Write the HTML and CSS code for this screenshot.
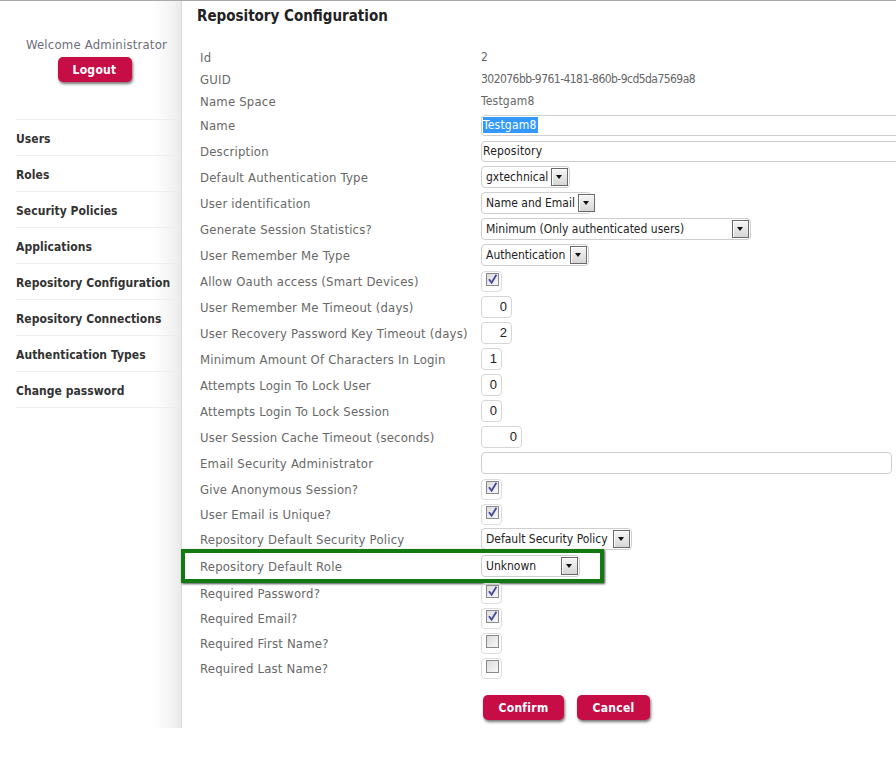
FILE: index.html
```html
<!DOCTYPE html>
<html>
<head>
<meta charset="utf-8">
<title>Repository Configuration</title>
<link rel="stylesheet" href="styles.css">
</head>
<body>
<div class="page">
  <aside class="sidebar">
    <div class="welcome">Welcome Administrator</div>
    <div class="logout-wrap"><button class="btn btn-logout">Logout</button></div>
    <nav class="menu">
      <a class="menu-item">Users</a>
      <a class="menu-item">Roles</a>
      <a class="menu-item">Security Policies</a>
      <a class="menu-item">Applications</a>
      <a class="menu-item">Repository Configuration</a>
      <a class="menu-item">Repository Connections</a>
      <a class="menu-item">Authentication Types</a>
      <a class="menu-item">Change password</a>
    </nav>
  </aside>
  <main class="content">
    <h1 class="title">Repository Configuration</h1>
    <div class="form">
      <div class="row row-t"><span class="label">Id</span><span class="value">2</span></div>
      <div class="row row-t"><span class="label">GUID</span><span class="value value-guid">302076bb-9761-4181-860b-9cd5da7569a8</span></div>
      <div class="row row-t"><span class="label">Name Space</span><span class="value">Testgam8</span></div>
      <div class="row"><span class="label">Name</span><span class="input input-wide"><span class="sel">Testgam8</span></span></div>
      <div class="row"><span class="label">Description</span><span class="input input-wide">Repository</span></div>
      <div class="row"><span class="label">Default Authentication Type</span><span class="select w-gx">gxtechnical<span class="drop"></span></span></div>
      <div class="row"><span class="label">User identification</span><span class="select w-ne">Name and Email<span class="drop"></span></span></div>
      <div class="row"><span class="label">Generate Session Statistics?</span><span class="select w-min">Minimum (Only authenticated users)<span class="drop"></span></span></div>
      <div class="row"><span class="label">User Remember Me Type</span><span class="select w-auth">Authentication<span class="drop"></span></span></div>
      <div class="row"><span class="label">Allow Oauth access (Smart Devices)</span><span class="cb"><span class="box checked"><svg viewBox="0 0 13 13" width="13" height="13"><path d="M3 6.2 L5.6 9.6 L10.4 1.8" fill="none" stroke="#3a4b9e" stroke-width="1.8"/></svg></span></span></div>
      <div class="row"><span class="label">User Remember Me Timeout (days)</span><span class="num n30">0</span></div>
      <div class="row"><span class="label">User Recovery Password Key Timeout (days)</span><span class="num n30">2</span></div>
      <div class="row"><span class="label">Minimum Amount Of Characters In Login</span><span class="num n20">1</span></div>
      <div class="row"><span class="label">Attempts Login To Lock User</span><span class="num n20">0</span></div>
      <div class="row"><span class="label">Attempts Login To Lock Session</span><span class="num n20">0</span></div>
      <div class="row"><span class="label">User Session Cache Timeout (seconds)</span><span class="num n40">0</span></div>
      <div class="row"><span class="label">Email Security Administrator</span><span class="input input-email"></span></div>
      <div class="row"><span class="label">Give Anonymous Session?</span><span class="cb"><span class="box checked"><svg viewBox="0 0 13 13" width="13" height="13"><path d="M3 6.2 L5.6 9.6 L10.4 1.8" fill="none" stroke="#3a4b9e" stroke-width="1.8"/></svg></span></span></div>
      <div class="row row-24"><span class="label">User Email is Unique?</span><span class="cb"><span class="box checked"><svg viewBox="0 0 13 13" width="13" height="13"><path d="M3 6.2 L5.6 9.6 L10.4 1.8" fill="none" stroke="#3a4b9e" stroke-width="1.8"/></svg></span></span></div>
      <div class="row"><span class="label">Repository Default Security Policy</span><span class="select w-pol">Default Security Policy<span class="drop"></span></span></div>
      <div class="row row-hl"><span class="label">Repository Default Role</span><span class="select w-unk">Unknown<span class="drop"></span></span></div>
      <div class="row"><span class="label">Required Password?</span><span class="cb"><span class="box checked"><svg viewBox="0 0 13 13" width="13" height="13"><path d="M3 6.2 L5.6 9.6 L10.4 1.8" fill="none" stroke="#3a4b9e" stroke-width="1.8"/></svg></span></span></div>
      <div class="row row-25"><span class="label">Required Email?</span><span class="cb"><span class="box checked"><svg viewBox="0 0 13 13" width="13" height="13"><path d="M3 6.2 L5.6 9.6 L10.4 1.8" fill="none" stroke="#3a4b9e" stroke-width="1.8"/></svg></span></span></div>
      <div class="row row-25"><span class="label">Required First Name?</span><span class="cb"><span class="box"></span></span></div>
      <div class="row row-25"><span class="label">Required Last Name?</span><span class="cb"><span class="box"></span></span></div>
    </div>
    <div class="actions">
      <button class="btn btn-confirm">Confirm</button>
      <button class="btn btn-cancel">Cancel</button>
    </div>
  </main>
</div>
</body>
</html>
```

FILE: styles.css
```css
html, body {
  margin: 0;
  padding: 0;
  background: #fff;
}
body {
  font-family: "DejaVu Sans Condensed", "DejaVu Sans", sans-serif;
  font-size: 13px;
  letter-spacing: 0.2px;
  color: #686868;
}
.page {
  display: flex;
  border-top: 1px solid #a9a9a9;
  overflow: hidden;
  width: 896px;
  align-items: flex-start;
}
.sidebar {
  width: 181px;
  flex: 0 0 181px;
  align-self: stretch;
  background: linear-gradient(to right, #fff 0, #fff 84%, #f2f2f2 96%, #e9e9e9 100%);
  padding-top: 36px;
  box-sizing: border-box;
}
.welcome {
  padding-left: 16px;
  padding-right: 4px;
  text-align: center;
  color: #6e6e7a;
  line-height: 16px;
}
.logout-wrap {
  padding-left: 16px;
  padding-right: 4px;
  text-align: center;
  margin-top: 4px;
  line-height: 0;
}
.btn {
  font-family: "DejaVu Sans Condensed", "DejaVu Sans", sans-serif;
  font-weight: bold;
  font-size: 12px;
  color: #fff;
  background: #c70d45;
  border: none;
  border-radius: 5px;
  height: 25px;
  padding: 0;
  box-shadow: 1px 2px 3px rgba(0, 0, 0, 0.55);
  letter-spacing: 0.3px;
}
.btn-logout { width: 74px; margin-left: -4px; }
.btn-confirm { width: 81px; }
.btn-cancel { width: 73px; margin-left: 13px; }
.menu {
  margin-top: 37px;
  margin-left: 16px;
  border-top: 1px solid #eeeeee;
}
.menu-item {
  display: block;
  height: 33px;
  padding-top: 2px;
  line-height: 35px;
  border-bottom: 1px solid #eeeeee;
  color: #333;
  font-weight: bold;
  font-size: 12px;
  letter-spacing: 0.05px;
  white-space: nowrap;
}
.content {
  flex: 1;
  border-left: 1px solid #d9d9d9;
  padding: 5px 0 8px 15px;
  min-width: 0;
}
.title {
  margin: 0;
  font-size: 15px;
  line-height: 20px;
  font-weight: bold;
  color: #222;
  letter-spacing: 0;
}
.form {
  margin-top: 20px;
  margin-left: 3px;
}
.row {
  display: flex;
  align-items: center;
  height: 26px;
  position: relative;
}
.row-t { height: 22px; }
.row-24 { height: 24px; }
.row-25 { height: 25px; }
.label {
  width: 281px;
  flex: 0 0 281px;
  white-space: nowrap;
}
.value {
  font-size: 12px;
  color: #666;
  white-space: nowrap;
}
.value-guid { letter-spacing: -0.55px; }
.input {
  display: inline-flex;
  align-items: center;
  box-sizing: border-box;
  height: 21px;
  border: 1px solid #cfcfcf;
  border-radius: 4px;
  padding-left: 1px;
  font-size: 12px;
  color: #222;
  background: #fff;
  white-space: nowrap;
}
.input-wide { width: 460px; flex: 0 0 460px; }
.input-email { width: 411px; height: 22px; }
.sel {
  background: #3399ff;
  color: #fff;
  line-height: 16px;
  padding-right: 1px;
}
.select {
  display: inline-flex;
  align-items: center;
  justify-content: space-between;
  box-sizing: border-box;
  height: 22px;
  border: 1px solid #cfcfcf;
  border-radius: 4px;
  padding-left: 4px;
  padding-right: 1px;
  font-size: 12px;
  letter-spacing: 0;
  color: #222;
  background: #fff;
  white-space: nowrap;
}
.w-gx { width: 89px; }
.w-ne { width: 110px; }
.w-min { width: 270px; }
.w-auth { width: 108px; }
.w-pol { width: 151px; }
.w-unk { width: 99px; }
.drop {
  position: relative;
  display: block;
  box-sizing: border-box;
  width: 17px;
  height: 18px;
  margin-left: 3px;
  border: 1px solid #6a6a6a;
  background: linear-gradient(#f6f6f6, #d6d6d6);
  box-shadow: inset 1px 1px 0 #fff;
  flex: 0 0 auto;
}
.drop::after {
  content: "";
  position: absolute;
  left: 4px;
  top: 6px;
  border-left: 3.5px solid transparent;
  border-right: 3.5px solid transparent;
  border-top: 4px solid #111;
}
.cb {
  display: inline-block;
  box-sizing: border-box;
  width: 21px;
  height: 21px;
  border: 1px solid #dcdcdc;
  border-radius: 4px;
  padding: 1px 0 0 4px;
  line-height: 0;
}
.box {
  display: inline-block;
  box-sizing: border-box;
  width: 13px;
  height: 13px;
  border: 1px solid #8a8a8a;
  background: linear-gradient(135deg, #dcdcdc, #f7f7f7);
  position: relative;
}
.box svg {
  position: absolute;
  left: -1px;
  top: -1px;
}
.num {
  display: inline-block;
  box-sizing: border-box;
  height: 22px;
  line-height: 20px;
  border: 1px solid #d6d6d6;
  border-radius: 4px;
  text-align: right;
  padding-right: 4px;
  font-family: "Liberation Sans", Arial, sans-serif;
  font-size: 13px;
  color: #222;
  letter-spacing: 0;
}
.n20 { width: 21px; }
.n30 { width: 31px; }
.n40 { width: 41px; }
.row-hl { height: 28px; }
.row-hl::after {
  content: "";
  position: absolute;
  left: -19px;
  top: -3px;
  width: 415px;
  height: 26px;
  border: 4px solid #137a13;
  box-shadow: 1px 1px 2px rgba(0, 0, 0, 0.7);
  pointer-events: none;
}
.actions {
  margin-top: 14px;
  margin-left: 286px;
  display: flex;
}
```
